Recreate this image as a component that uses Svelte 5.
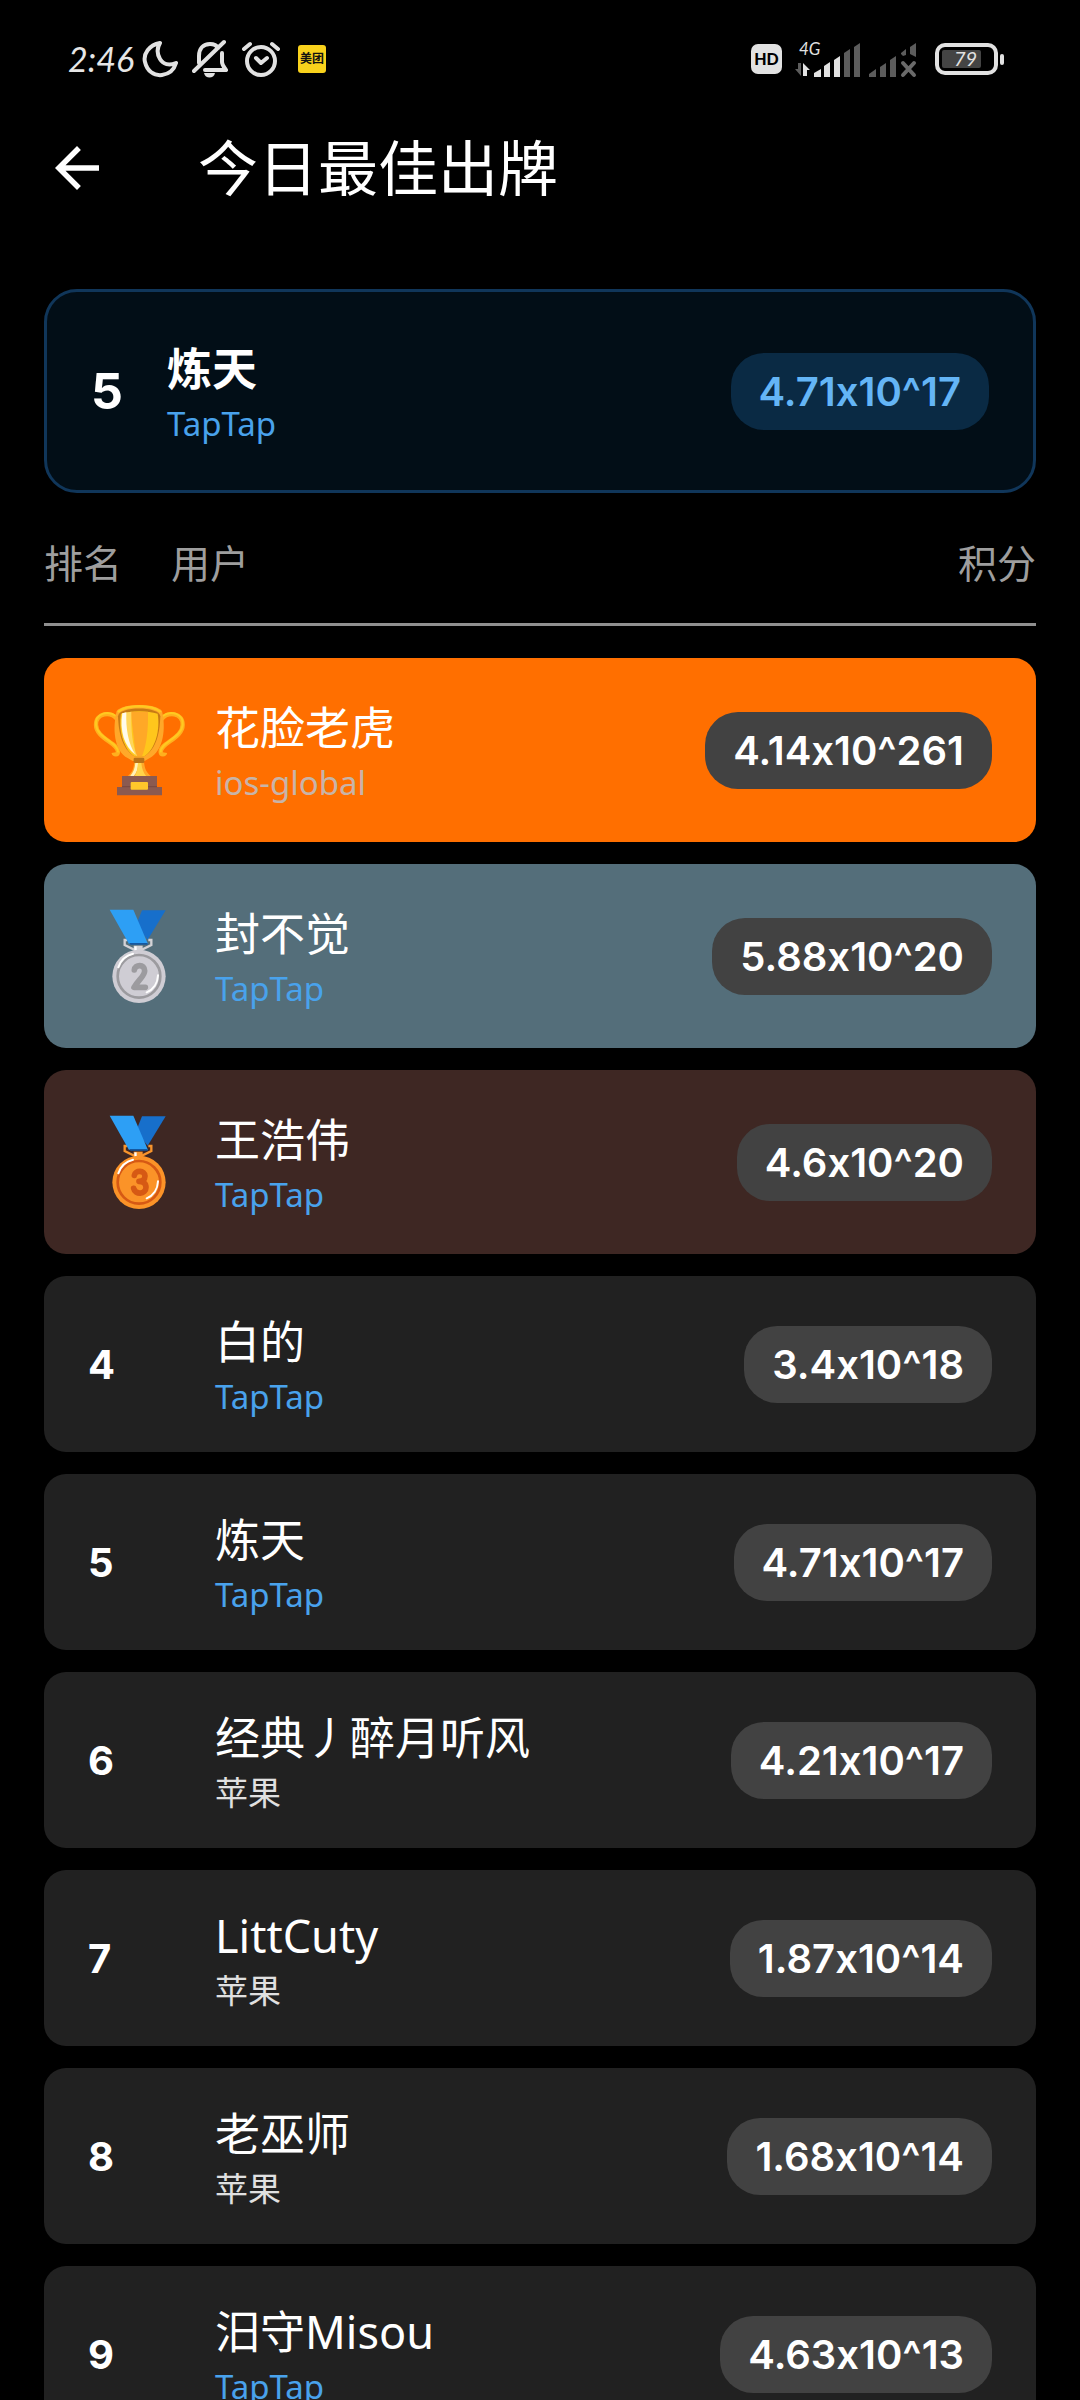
<script>
  /**
   * The signed-in player's own placement, shown above the list.
   */
  const me = { rank: 5, name: '炼天', platform: 'TapTap', score: '4.71x10^17' };

  const players = [
    { rank: 1, name: '花脸老虎', platform: 'ios-global', score: '4.14x10^261' },
    { rank: 2, name: '封不觉', platform: 'TapTap', score: '5.88x10^20' },
    { rank: 3, name: '王浩伟', platform: 'TapTap', score: '4.6x10^20' },
    { rank: 4, name: '白的', platform: 'TapTap', score: '3.4x10^18' },
    { rank: 5, name: '炼天', platform: 'TapTap', score: '4.71x10^17' },
    { rank: 6, name: '经典丿醉月听风', platform: '苹果', score: '4.21x10^17' },
    { rank: 7, name: 'LittCuty', platform: '苹果', score: '1.87x10^14' },
    { rank: 8, name: '老巫师', platform: '苹果', score: '1.68x10^14' },
    { rank: 9, name: '汨守Misou', platform: 'TapTap', score: '4.63x10^13' },
  ];

  const platformClasses = {
    TapTap: 'taptap',
    苹果: 'apple',
    'ios-global': 'ios',
  };

  const medals = {
    2: { body: '#cfcdd4', ring: '#9c9b9f', hook: '#d3d2d6' },
    3: { body: '#fb9328', ring: '#d65914', hook: '#f7942c' },
  };
</script>

<div class="screen">
  <div class="status-bar">
    <span class="time">2:46</span>
    <svg class="moon" width="36" height="38" viewBox="0 0 36 38" aria-hidden="true">
      <path d="M18 3C7 5 1 14 3 22c2 9 9 14 17 13 7-1 12-5 14-12-7 3-13 1-16-4-3-5-3-11 0-16z" />
    </svg>
    <svg class="bell" width="36" height="40" viewBox="0 0 36 40" aria-hidden="true">
      <path d="M7 24v-7c0-7 4-12 11-12 4 0 7 2 8 4M30 14v9c0 3 2 5 4 8H13M2 32L32 3" />
      <path class="clapper" d="M12 34h11c-1 6-10 6-11 0z" />
    </svg>
    <svg class="alarm" width="40" height="38" viewBox="0 0 40 38" aria-hidden="true">
      <circle cx="20" cy="21" r="14" />
      <path d="M3 9l6-5M37 9l-6-5M15 18l5 5 6-5" />
    </svg>
    <span class="app-badge">美团</span>

    <div class="status-right">
      <span class="hd">HD</span>
      <svg class="signal" width="67" height="36" viewBox="0 0 67 36" aria-hidden="true">
        <text x="4" y="14">4G</text>
        <path class="dim" d="M0 28h3v-6h3v13zM49 12l6-4v28h-6zM59 6l6-4v34h-6z" />
        <path d="M8 22l7 7h-3v6H8zM19 32l7-4v8h-7zM29 25l6-4v15h-6zM39 19l6-4v21h-6z" />
      </svg>
      <svg class="signal" width="48" height="36" viewBox="0 0 48 36" aria-hidden="true">
        <path class="dim" d="M0 33l7-5v8H0zM11 26l6-4v14h-6zM21 19l6-4v21h-6zM32 12l5-4v6l-3 1-2-2zM41 6l6-4v14l-6-3z" />
        <path class="cross" d="M34 22l11 12M45 22L34 34" />
      </svg>
      <svg class="battery" width="69" height="32" viewBox="0 0 69 32" aria-hidden="true">
        <rect class="charge" x="7" y="7" width="39" height="18" rx="2" />
        <rect class="shell" x="2" y="2" width="59" height="28" rx="8" />
        <path class="nub" d="M67 13v7" />
        <text x="19" y="23">79</text>
      </svg>
    </div>
  </div>

  <header>
    <button class="back" aria-label="返回">
      <svg width="66" height="66" viewBox="0 0 24 24" aria-hidden="true">
        <path d="M20 11H7.83l5.59-5.59L12 4l-8 8 8 8 1.41-1.41L7.83 13H20v-2z" />
      </svg>
    </button>
    <h1>今日最佳出牌</h1>
  </header>

  <main>
    <section class="me">
      <span class="my-rank">{me.rank}</span>
      <div class="player">
        <span class="name">{me.name}</span>
        <span class="platform taptap">{me.platform}</span>
      </div>
      <span class="score">{me.score}</span>
    </section>

    <table>
      <thead>
        <tr>
          <th class="rank">排名</th>
          <th class="player">用户</th>
          <th>积分</th>
        </tr>
      </thead>
      <tbody>
        {#each players as player (player.rank)}
          <tr class="place-{player.rank}">
            <td class="rank">
              {#if player.rank === 1}
                <svg class="award" width="102" height="94" viewBox="174 191 306 282" role="img" aria-label="1">
                  <g fill="none" stroke="#ffb01e" stroke-width="13">
                    <path d="M262 240c-20-25-64-20-64 16 0 42 67 54 66 82-1 10-12 8-13 2" />
                    <path d="M394 240c20-25 64-20 64 16 0 42-67 54-66 82 1 10 12 8 13 2" />
                  </g>
                  <g fill="none" stroke="#ffca20" stroke-width="6">
                    <path d="M258 230c-24-18-63-8-60 27 4 40 68 52 66 82" />
                    <path d="M398 230c24-18 63-8 60 27-4 40-68 52-66 82" />
                  </g>
                  <path fill="#ffa829" d="M260 215c18-24 118-24 136 0 12 50 6 118-38 142l-14 8h-36l-14-8c-44-24-46-92-34-142z" />
                  <path fill="#c77a14" d="M264 231c2-31 124-31 127 0-2 48-10 96-48 120h-30c-38-24-47-72-49-120z" />
                  <path fill="#ffc61c" d="M273 223c30-10 80-10 110 0 8 48-6 104-40 128h-30c-34-24-48-80-40-128z" />
                  <path fill="#ffa827" d="M302 217h52c1 53-4 99-18 134h-18z" />
                  <path fill="#ffd65a" d="M276 222l28-5c-1 58 3 101 18 134-38-21-54-75-46-129z" />
                  <path fill="#fffbea" d="M277 222l12-3c-2 49 6 96 27 126-34-23-47-73-39-123z" />
                  <path fill="none" stroke="#ffca20" stroke-width="7" d="M264 218c25-23 102-23 128 0" />
                  <path fill="#ffa829" d="M313 368h29c2 20 7 31 21 43h-70c14-12 18-23 20-43z" />
                  <path fill="#fff2b8" d="M316 371h8c0 17-4 29-13 40h-11c9-10 15-24 16-40z" />
                  <path fill="#ffd54a" d="M324 371h10c1 17 7 30 15 40h-35c6-11 10-23 10-40z" />
                  <rect fill="#b97218" x="311" y="355" width="32" height="16" rx="4" />
                  <path fill="#8b5a50" d="M276 410h105v33h15v25H261v-25h15z" />
                  <path fill="#7a4b43" d="M276 440h105v4H276z" />
                  <rect fill="#ffc72b" x="302" y="428" width="52" height="23" rx="3" />
                </svg>
              {:else if medals[player.rank]}
                {@const medal = medals[player.rank]}
                <svg class="award" width="102" height="94" viewBox="86 91 306 282" role="img" aria-label={player.rank}>
                  <path fill="#176fcb" d="M248 95h71l-54 88-35-43z" />
                  <path fill="none" stroke={medal.hook} stroke-width="7" d="M203 184h-7v15l26 13h28l26-13v-15h-9" />
                  <path fill="#2d9ff5" d="M151 93h71l44 103h-57z" />
                  <path fill="#1458a0" d="M209 193h56v5h-51z" />
                  <path fill={medal.hook} d="M223 201h27v22h-27z" />
                  <path fill="#fff" d="M225 203h7v14h-7z" />
                  <circle fill={medal.body} cx="239" cy="293" r="80" />
                  <circle fill="none" stroke={medal.ring} stroke-width="8" cx="239" cy="293" r="64" />
                  <g fill="none" stroke="#fff" stroke-width="6" stroke-linecap="round">
                    <path d="M177 266c7-21 23-36 44-41M262 341c19-8 33-27 34-51" />
                  </g>
                  {#if player.rank === 2}
                    <path class="digit" stroke={medal.ring} d="M225 274c2-18 31-18 31 2 0 16-17 25-32 50h34" />
                  {:else}
                    <path class="digit" stroke={medal.ring} d="M225 272c2-16 32-16 32 2 0 11-8 16-18 16 13 0 21 6 21 18 0 22-33 23-37 3" />
                  {/if}
                </svg>
              {:else}
                {player.rank}
              {/if}
            </td>
            <td class="player">
              <span class="name">{player.name}</span>
              <span class="platform {platformClasses[player.platform]}">{player.platform}</span>
            </td>
            <td><span class="score">{player.score}</span></td>
          </tr>
        {/each}
      </tbody>
    </table>
  </main>
</div>

<style>
  :global(body) {
    background: #000;
  }
  .screen {
    height: 100vh;
    overflow: hidden;
    background: #000;
    color: #fff;
    font-family: 'Noto Sans', 'Noto Sans CJK SC', sans-serif;
  }

  /* status bar */
  .status-bar {
    display: flex;
    align-items: center;
    height: 91px;
    padding: 26px 76px 0 68px;
    box-sizing: border-box;
    color: #e6e6e6;
    font-family: Lato, 'Noto Sans CJK SC', sans-serif;
  }
  .status-bar svg {
    flex: none;
    fill: none;
    stroke: #e2e2e2;
    stroke-width: 4;
    stroke-linecap: round;
    stroke-linejoin: round;
  }
  .time {
    width: 74px;
    font-size: 34px;
    font-style: italic;
    line-height: 40px;
  }
  .moon {
    margin-right: 14px;
  }
  .bell {
    margin-right: 13px;
  }
  .status-bar .clapper {
    fill: #e2e2e2;
    stroke: none;
  }
  .app-badge {
    width: 28px;
    margin-left: 17px;
    border-radius: 3px;
    background: #f9d21c;
    color: #111;
    font-size: 12px;
    font-weight: 700;
    line-height: 28px;
    text-align: center;
  }
  .status-right {
    display: flex;
    align-items: center;
    margin-left: auto;
  }
  .hd {
    width: 31px;
    margin-right: 13px;
    border-radius: 7px;
    background: #e2e2e2;
    color: #000;
    font-size: 16px;
    font-weight: 900;
    line-height: 30px;
    text-align: center;
  }
  .status-bar .signal {
    margin-right: 7px;
    overflow: visible;
    fill: #e2e2e2;
    stroke: none;
  }
  .status-bar .signal + .signal {
    margin-right: 18px;
  }
  .signal text {
    font-size: 17px;
    font-style: italic;
  }
  .signal .dim {
    fill: #5c5c5c;
  }
  .signal .cross {
    stroke: #6a6a6a;
    stroke-width: 4;
  }
  .battery .charge {
    fill: #444;
    stroke: none;
  }
  .battery text {
    fill: #e2e2e2;
    stroke: none;
    font-size: 20px;
    font-style: italic;
  }

  header {
    display: flex;
    align-items: center;
    gap: 88px;
    height: 154px;
    padding: 0 44px;
  }
  .back {
    display: flex;
    padding: 0;
    border: 0;
    background: none;
    cursor: pointer;
  }
  .back svg {
    fill: #fff;
  }
  h1 {
    margin: 0;
    font-size: 60px;
    font-weight: 400;
    line-height: 80px;
  }

  main {
    padding: 44px;
  }
  .me {
    display: flex;
    align-items: center;
    padding: 44px;
    border: 3px solid #10365a;
    border-radius: 33px;
    background: #020e17;
  }
  .my-rank {
    margin-right: 44px;
    font-family: Inter, sans-serif;
    font-size: 50px;
    font-weight: 700;
  }
  .player {
    flex: 1;
  }
  .name,
  .platform {
    display: block;
  }
  .name {
    font-size: 45px;
    line-height: 66px;
  }
  .me .name {
    font-weight: 700;
  }
  .platform {
    font-size: 33px;
    line-height: 44px;
  }
  .taptap {
    color: #49a2ec;
  }
  .apple {
    color: #e0e0e0;
  }
  .ios {
    color: #c8b4a8;
  }
  .score {
    display: block;
    padding: 11px 28px;
    border-radius: 33px;
    background: #424242;
    font-family: Inter, sans-serif;
    font-size: 40px;
    font-weight: 600;
    /* keeps the x in scores from turning into a multiplication sign */
    font-variant-ligatures: no-contextual;
    line-height: 55px;
  }
  .me .score {
    background: #0a2a44;
    color: #64b5f6;
  }

  /* the rows are cards, so the table is laid out with flex */
  table,
  thead,
  tbody {
    display: block;
  }
  tr {
    display: flex;
    align-items: center;
  }
  th,
  td {
    padding: 0;
    text-align: left;
  }
  .rank {
    width: 127px;
  }
  thead tr {
    margin-top: 46px;
    padding-bottom: 36px;
    border-bottom: 3px solid #8f8f8f;
  }
  th {
    color: #9e9e9e;
    font-size: 39px;
    font-weight: 400;
    line-height: 48px;
  }
  tbody tr {
    margin-top: 22px;
    padding: 33px 44px;
    border-radius: 22px;
    background: #212121;
  }
  tbody .place-1 {
    margin-top: 32px;
    background: #ff6f00;
  }
  tbody .place-2 {
    background: #546e7a;
  }
  tbody .place-3 {
    background: #3e2723;
  }
  td.rank {
    font-family: Inter, sans-serif;
    font-size: 40px;
    font-weight: 700;
  }
  .award {
    display: block;
    margin: 12px 0;
  }
  .digit {
    fill: none;
    stroke-width: 17;
    stroke-linecap: round;
    stroke-linejoin: round;
  }
</style>
